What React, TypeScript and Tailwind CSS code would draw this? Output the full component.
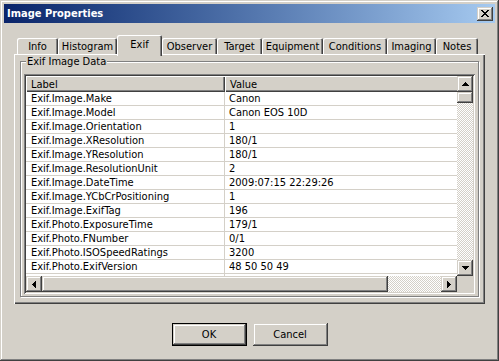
import React from "react";

const FONT = "font-['DejaVu_Sans_Condensed','Liberation_Sans',sans-serif]";
const BTN3D =
  "shadow-[inset_-1px_-1px_0_#404040,inset_1px_1px_0_#d4d0c8,inset_-2px_-2px_0_#808080,inset_2px_2px_0_#fff]";
const DITHER =
  "bg-[image:repeating-conic-gradient(#fff_0_25%,#d4d0c8_0_50%)] bg-[length:2px_2px]";

const rows: [string, string][] = [
  ["Exif.Image.Make", "Canon"],
  ["Exif.Image.Model", "Canon EOS 10D"],
  ["Exif.Image.Orientation", "1"],
  ["Exif.Image.XResolution", "180/1"],
  ["Exif.Image.YResolution", "180/1"],
  ["Exif.Image.ResolutionUnit", "2"],
  ["Exif.Image.DateTime", "2009:07:15 22:29:26"],
  ["Exif.Image.YCbCrPositioning", "1"],
  ["Exif.Image.ExifTag", "196"],
  ["Exif.Photo.ExposureTime", "179/1"],
  ["Exif.Photo.FNumber", "0/1"],
  ["Exif.Photo.ISOSpeedRatings", "3200"],
  ["Exif.Photo.ExifVersion", "48 50 50 49"],
  ["Exif.Photo.DateTimeOriginal", "2009:07:15 22:29:26"],
];

const tabs = [
  { label: "Info", w: "w-[41px]" },
  { label: "Histogram", w: "w-[59px]" },
  { label: "Exif", w: "w-[45px]", active: true },
  { label: "Observer", w: "w-[55px]" },
  { label: "Target", w: "w-[45px]" },
  { label: "Equipment", w: "w-[61px]" },
  { label: "Conditions", w: "w-[64px]" },
  { label: "Imaging", w: "w-[49px]" },
  { label: "Notes", w: "w-[42px]" },
];

function Arrow({ dir }: { dir: "up" | "down" | "left" | "right" }) {
  if (dir === "up" || dir === "down") {
    const r =
      dir === "up"
        ? [
            [3, 0, 1],
            [2, 1, 3],
            [1, 2, 5],
            [0, 3, 7],
          ]
        : [
            [0, 0, 7],
            [1, 1, 5],
            [2, 2, 3],
            [3, 3, 1],
          ];
    return (
      <svg width="7" height="4" viewBox="0 0 7 4" shapeRendering="crispEdges">
        {r.map(([x, y, w], i) => (
          <rect key={i} x={x} y={y} width={w} height={1} fill="#000" />
        ))}
      </svg>
    );
  }
  const r =
    dir === "left"
      ? [
          [0, 3, 1],
          [1, 2, 3],
          [2, 1, 5],
          [3, 0, 7],
        ]
      : [
          [0, 0, 7],
          [1, 1, 5],
          [2, 2, 3],
          [3, 3, 1],
        ];
  return (
    <svg width="4" height="7" viewBox="0 0 4 7" shapeRendering="crispEdges">
      {r.map(([x, y, h], i) => (
        <rect key={i} x={x} y={y} width={1} height={h} fill="#000" />
      ))}
    </svg>
  );
}

function ScrollBtn({ dir }: { dir: "up" | "down" | "left" | "right" }) {
  return (
    <div
      className={`w-[16px] h-[16px] shrink-0 bg-[#d4d0c8] flex items-center justify-center ${BTN3D}`}
    >
      <Arrow dir={dir} />
    </div>
  );
}

function CloseGlyph() {
  const px = [
    [0, 0, 2], [6, 0, 2],
    [1, 1, 2], [5, 1, 2],
    [2, 2, 4],
    [3, 3, 2],
    [2, 4, 4],
    [1, 5, 2], [5, 5, 2],
    [0, 6, 2], [6, 6, 2],
  ];
  return (
    <svg width="8" height="7" viewBox="0 0 8 7" shapeRendering="crispEdges">
      {px.map(([x, y, w], i) => (
        <rect key={i} x={x} y={y} width={w} height={1} fill="#000" />
      ))}
    </svg>
  );
}

export default function App() {
  return (
    <div
      className={`w-[499px] h-[361px] bg-[#d4d0c8] p-[4px] flex flex-col text-[11px] leading-[13px] text-black ${FONT} shadow-[inset_-1px_-1px_0_#404040,inset_1px_1px_0_#d4d0c8,inset_-2px_-2px_0_#808080,inset_2px_2px_0_#fff]`}
    >
      {/* Title bar */}
      <div className="h-[19px] shrink-0 flex items-center justify-between pl-[3px] pr-[2px] bg-gradient-to-r from-[#0a246a] to-[#a6caf0]">
        <span className="text-white font-bold text-[11px]">Image Properties</span>
        <div
          className={`w-[16px] h-[14px] bg-[#d4d0c8] flex items-center justify-center ${BTN3D}`}
        >
          <CloseGlyph />
        </div>
      </div>

      {/* Body */}
      <div className="flex flex-col px-[10px] pt-[12px]">
        {/* Tab strip */}
        <div className="h-[19px] flex items-end pl-[3px]">
          {tabs.map((t) =>
            t.active ? (
              <div
                key={t.label}
                className={`${t.w} h-[21px] -mb-[2px] relative z-10 bg-[#d4d0c8] rounded-t-[2px] pt-[3px] text-center shadow-[inset_1px_1px_0_#fff,inset_-1px_0_0_#404040,inset_-2px_0_0_#808080]`}
              >
                {t.label}
              </div>
            ) : (
              <div
                key={t.label}
                className={`${t.w} h-[16px] bg-[#d4d0c8] rounded-t-[2px] flex items-center justify-center pt-[1px] shadow-[inset_1px_1px_0_#fff,inset_-1px_0_0_#404040,inset_-2px_0_0_#808080]`}
              >
                {t.label}
              </div>
            )
          )}
        </div>

        {/* Tab panel */}
        <div className="w-[471px] h-[250px] bg-[#d4d0c8] pt-[7px] pl-[6px] shadow-[inset_1px_1px_0_#fff,inset_-1px_-1px_0_#404040,inset_-2px_-2px_0_#808080]">
          {/* Group box */}
          <div className="relative w-[459px] h-[236px] border border-[#808080] shadow-[1px_1px_0_#fff,inset_1px_1px_0_#fff] pt-[12px] pl-[3px]">
            <div className="absolute left-[5px] top-[-7px] px-[1px] bg-[#d4d0c8]">
              Exif Image Data
            </div>

            {/* List view */}
            <div className="w-[451px] h-[220px] p-[2px] bg-[#d4d0c8] shadow-[inset_1px_1px_0_#808080,inset_-1px_-1px_0_#fff,inset_2px_2px_0_#404040,inset_-2px_-2px_0_#d4d0c8]">
              <div className="w-[447px] h-[216px] flex flex-col">
                <div className="flex h-[200px]">
                  {/* data area */}
                  <div className="w-[431px] h-[200px] overflow-hidden bg-white">
                    <div className="w-[497px]">
                      <div className="flex h-[16px] bg-[#d4d0c8]">
                        <div className="w-[199px] h-[16px] pl-[5px] flex items-center shadow-[inset_1px_1px_0_#fff,inset_-1px_-1px_0_#404040,inset_-2px_-2px_0_#808080]">
                          Label
                        </div>
                        <div className="w-[298px] h-[16px] pl-[5px] flex items-center shadow-[inset_1px_1px_0_#fff,inset_-1px_-1px_0_#404040,inset_-2px_-2px_0_#808080]">
                          Value
                        </div>
                      </div>
                      {rows.map(([k, v]) => (
                        <div key={k} className="flex h-[14px]">
                          <div className="w-[199px] h-[14px] pl-[5px] border-b border-r border-[#d4d0c8] flex items-center whitespace-nowrap overflow-hidden">
                            {k}
                          </div>
                          <div className="w-[298px] h-[14px] pl-[4px] border-b border-[#d4d0c8] flex items-center whitespace-nowrap">
                            {v}
                          </div>
                        </div>
                      ))}
                    </div>
                  </div>
                  {/* vertical scrollbar */}
                  <div className={`w-[16px] h-[200px] flex flex-col ${DITHER}`}>
                    <ScrollBtn dir="up" />
                    <div className={`w-[16px] h-[11px] bg-[#d4d0c8] ${BTN3D}`} />
                    <div className="flex-1" />
                    <ScrollBtn dir="down" />
                  </div>
                </div>
                <div className="flex h-[16px]">
                  {/* horizontal scrollbar */}
                  <div className={`w-[431px] h-[16px] flex ${DITHER}`}>
                    <ScrollBtn dir="left" />
                    <div className={`w-[346px] h-[16px] bg-[#d4d0c8] ${BTN3D}`} />
                    <div className="flex-1" />
                    <ScrollBtn dir="right" />
                  </div>
                  <div className="w-[16px] h-[16px] bg-[#d4d0c8]" />
                </div>
              </div>
            </div>
          </div>
        </div>

        {/* Buttons */}
        <div className="mt-[19px] flex justify-center gap-[6px]">
          <div className="w-[75px] h-[23px] border border-black bg-[#d4d0c8]">
            <div
              className={`w-full h-full flex items-center justify-center ${BTN3D}`}
            >
              OK
            </div>
          </div>
          <div
            className={`w-[75px] h-[23px] bg-[#d4d0c8] flex items-center justify-center ${BTN3D}`}
          >
            Cancel
          </div>
        </div>
      </div>
    </div>
  );
}
